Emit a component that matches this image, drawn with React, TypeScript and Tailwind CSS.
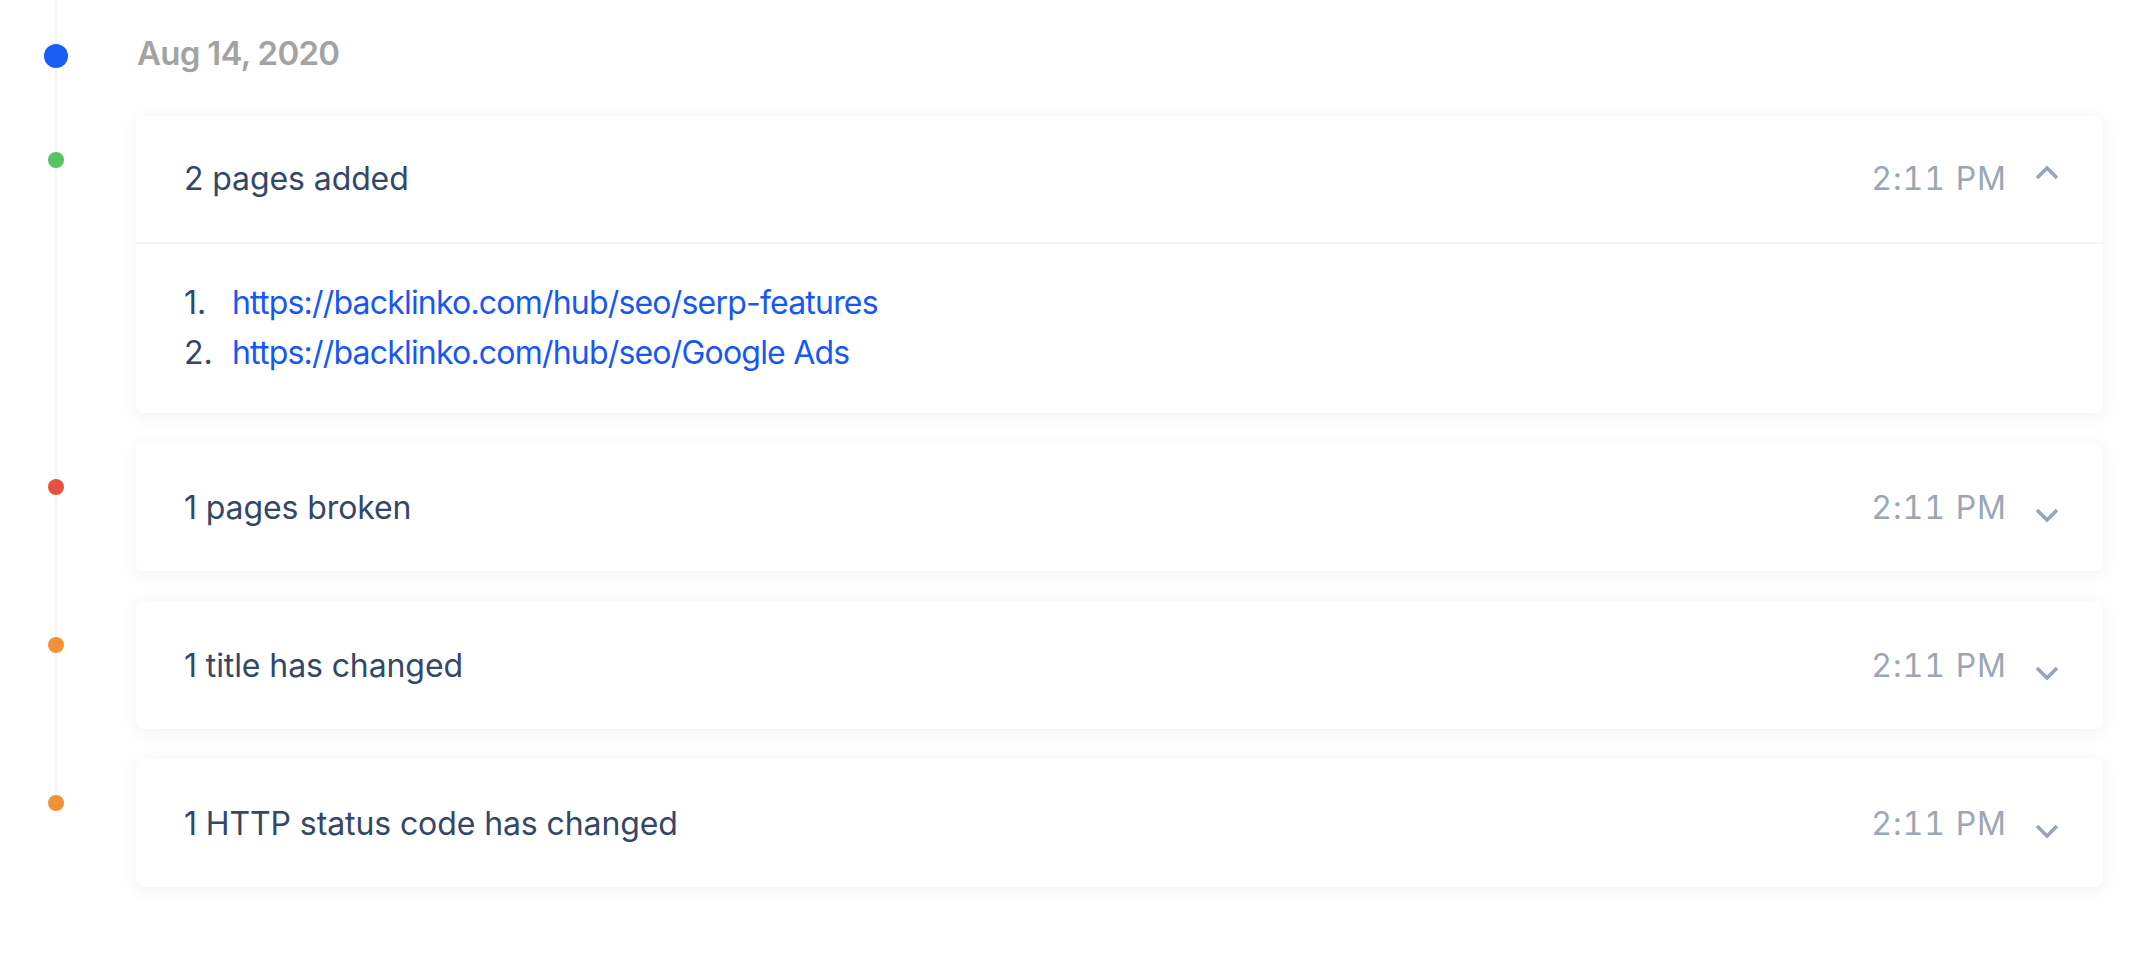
import React from "react";

const FONT = { fontFamily: "Inter, 'Noto Sans', sans-serif" };

function Chevron({ up }: { up: boolean }) {
  return (
    <svg width="32" height="32" viewBox="0 0 32 32" fill="none" className="ml-[24px] shrink-0">
      {up ? (
        <path d="M6 15 L16 5 L26 15" stroke="#98a3b3" strokeWidth="3.5" strokeLinecap="butt" strokeLinejoin="miter" />
      ) : (
        <path d="M6 18 L16 28 L26 18" stroke="#98a3b3" strokeWidth="3.5" strokeLinecap="butt" strokeLinejoin="miter" />
      )}
    </svg>
  );
}

function Header({ title, up }: { title: string; up: boolean }) {
  return (
    <div className="flex h-[126px] items-center pl-[48px] pr-[40px]">
      <div className="flex-1 text-[32px] leading-[48px] text-[#344767] tracking-[-0.1px]">{title}</div>
      <div className="text-[32px] leading-[48px] text-[#9ca7b6] tabular-nums tracking-[1px]">2:11 PM</div>
      <Chevron up={up} />
    </div>
  );
}

const rows = [
  { title: "1 pages broken", color: "bg-[#e5523f]" },
  { title: "1 title has changed", color: "bg-[#f09235]" },
  { title: "1 HTTP status code has changed", color: "bg-[#f09235]" },
];

export default function App() {
  return (
    <div className="relative h-[960px] w-full bg-white pt-[32px] pr-[35px]" style={FONT}>
      <div className="absolute left-[55px] top-0 h-[803px] w-[2px] bg-[#f3f4f7]" />
      <div className="relative flex h-[48px] items-center">
        <div className="flex w-[112px] justify-center">
          <div className="h-[24px] w-[24px] rounded-full bg-[#1a5ef5]" />
        </div>
        <div className="ml-[25px] mb-[7px] text-[33px] font-semibold leading-[48px] tracking-[-0.7px] text-[#a3a3a3]">
          Aug 14, 2020
        </div>
      </div>
      <div className="relative mt-[36px] flex flex-col gap-[30px]">
        <div className="flex">
          <div className="flex w-[112px] shrink-0 justify-center pt-[36px]">
            <div className="h-[16px] w-[16px] rounded-full bg-[#57c464]" />
          </div>
          <div className="ml-[24px] flex-1 rounded-[8px] bg-white shadow-[0_3px_18px_rgba(0,0,0,0.06)]">
            <div className="border-b-2 border-[#f5f5f6]">
              <Header title="2 pages added" up={true} />
            </div>
            <div className="pl-[48px] pt-[34px] pb-[35px] text-[32px] leading-[50px]">
              <div className="flex">
                <span className="w-[48px] text-[#344767]">1.</span>
                <span className="text-[#1758f4] tracking-[-0.8px]">https://backlinko.com/hub/seo/serp-features</span>
              </div>
              <div className="flex">
                <span className="w-[48px] text-[#344767]">2.</span>
                <span className="text-[#1758f4] tracking-[-0.8px]">https://backlinko.com/hub/seo/Google Ads</span>
              </div>
            </div>
          </div>
        </div>
        {rows.map((r) => (
          <div key={r.title} className="flex">
            <div className="flex w-[112px] shrink-0 justify-center pt-[36px]">
              <div className={`h-[16px] w-[16px] rounded-full ${r.color}`} />
            </div>
            <div className="ml-[24px] flex-1 rounded-[8px] bg-white shadow-[0_3px_18px_rgba(0,0,0,0.06)]">
              <div className="h-[2px]" />
              <Header title={r.title} up={false} />
            </div>
          </div>
        ))}
      </div>
    </div>
  );
}
